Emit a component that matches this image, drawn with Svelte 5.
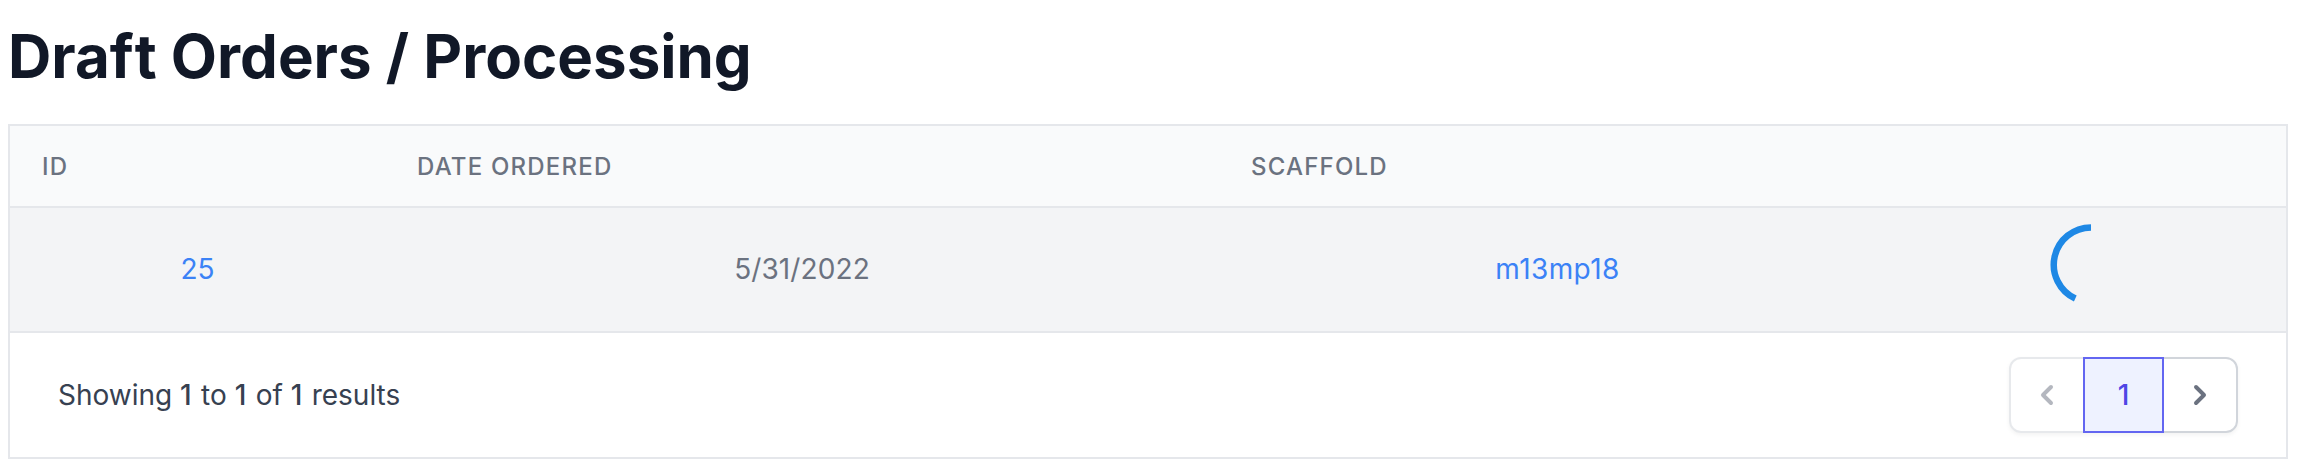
<script>
  const orders = [{ id: '25', date: '5/31/2022', scaffold: 'm13mp18' }];
</script>

<main>
  <h1>Dra<span class="wide">f</span>t Orders / Processing</h1>
  <section class="card">
    <div class="grid head">
      <div>ID</div>
      <div>Date Ordered</div>
      <div>Scaffold</div>
      <div></div>
    </div>
    {#each orders as order}
      <div class="grid row">
        <div><span class="link">{order.id}</span></div>
        <div class="date">{order.date}</div>
        <div><span class="link scaffold">{order.scaffold}</span></div>
        <div>
          <svg class="spinner" viewBox="0 0 100 100" fill="none">
            <path d="M50 12.4A37.3 37.3 0 0 0 34.3 83.5" stroke="#1e88e5" stroke-width="6.5" />
          </svg>
        </div>
      </div>
    {/each}
    <footer>
      <p>Showing <b>1</b> to <b>1</b> of <b>1</b> results</p>
      <nav>
        <button class="prev" disabled aria-label="Previous">
          <svg viewBox="0 0 20 20" fill="currentColor"><path fill-rule="evenodd" d="M12.707 5.293a1 1 0 010 1.414L9.414 10l3.293 3.293a1 1 0 01-1.414 1.414l-4-4a1 1 0 010-1.414l4-4a1 1 0 011.414 0z" clip-rule="evenodd" /></svg>
        </button>
        <button class="page">1</button>
        <button class="next" aria-label="Next">
          <svg viewBox="0 0 20 20" fill="currentColor"><path fill-rule="evenodd" d="M7.293 14.707a1 1 0 010-1.414L10.586 10 7.293 6.707a1 1 0 011.414-1.414l4 4a1 1 0 010 1.414l-4 4a1 1 0 01-1.414 0z" clip-rule="evenodd" /></svg>
        </button>
      </nav>
    </footer>
  </section>
</main>

<style>
  :global(body) {
    background: #fff;
  }
  main {
    box-sizing: border-box;
    height: 468px;
    padding: 20px 10px 0 8px;
    font-family: Inter, sans-serif;
    font-size: 28px;
    line-height: 40px;
  }
  h1 {
    margin: 0 0 32px;
    font-size: 60px;
    line-height: 72px;
    font-weight: 700;
    color: #111827;
  }
  .wide {
    letter-spacing: 1px;
  }
  .card {
    border: 2px solid #e5e7eb;
  }
  .grid {
    display: grid;
    grid-template-columns: 375px 834px 677px 390px;
    align-items: center;
    border-bottom: 2px solid #e5e7eb;
  }
  .head {
    height: 80px;
    background: #f9fafb;
    color: #6b7280;
    font-size: 24px;
    line-height: 32px;
    font-weight: 500;
    letter-spacing: 1.2px;
    text-transform: uppercase;
  }
  .head > div {
    padding: 2px 32px 0;
  }
  .row {
    height: 123px;
    background: #f3f4f6;
    color: #6b7280;
    text-align: center;
  }
  .row > div:not(:last-child) {
    padding-bottom: 1px;
  }
  .date {
    letter-spacing: 0.1px;
  }
  .link {
    color: #3b82f6;
  }
  .scaffold {
    letter-spacing: 0.4px;
  }
  .spinner {
    display: block;
    width: 100px;
    height: 100px;
    margin: 0 auto 9px;
  }
  footer {
    display: flex;
    align-items: center;
    justify-content: space-between;
    height: 124px;
    box-sizing: border-box;
    padding: 0 48px;
    color: #374151;
  }
  p {
    margin: 0;
  }
  b {
    font-weight: 500;
    letter-spacing: 1.5px;
  }
  nav {
    display: flex;
    border-radius: 12px;
    box-shadow: 0 2px 4px rgba(0, 0, 0, 0.05);
  }
  button {
    box-sizing: border-box;
    height: 76px;
    margin: 0;
    padding: 16px;
    border: 2px solid #d1d5db;
    background: #fff;
    color: #6b7280;
    font: 500 28px/40px Inter, sans-serif;
  }
  button svg {
    display: block;
    width: 40px;
    height: 40px;
  }
  .prev {
    border-radius: 12px 0 0 12px;
    opacity: 0.5;
  }
  .page {
    position: relative;
    z-index: 1;
    width: 81px;
    margin: 0 -2px;
    border-color: #6366f1;
    background: #eef2ff;
    color: #4f46e5;
  }
  .next {
    border-radius: 0 12px 12px 0;
  }
</style>
